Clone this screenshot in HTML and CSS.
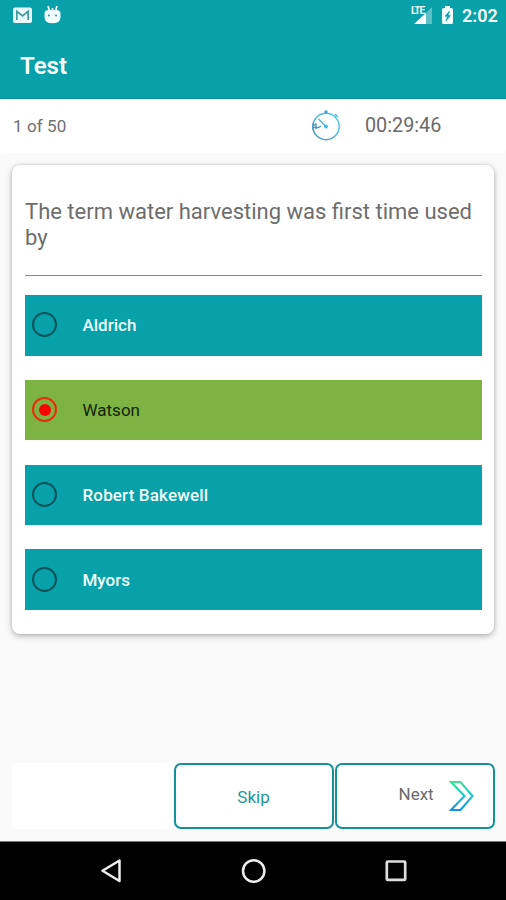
FILE: index.html
```html
<!DOCTYPE html>
<html lang="en">
<head>
<meta charset="utf-8">
<title>Test</title>
<link rel="stylesheet" href="styles.css">
</head>
<body>
<div class="screen">
  <header class="header">
    <div class="status">
      <svg class="status-left" width="70" height="30" viewBox="0 0 70 30">
        <rect x="13" y="7.5" width="19" height="15.5" rx="2" fill="#e9fbfb"/>
        <path d="M16.8 20V11.3l5.7 4.6 5.7-4.6V20" fill="none" stroke="#3f9b9d" stroke-width="1.7"/>
        <path d="M44.500 14q0-4 4-4h8q4 0 4 4v3q0 6.300-8 6.300t-8-6.300z" fill="#f3ffff"/>
        <path d="M48 6l1.500 5M57 6l-1.500 5M52.500 8v3" stroke="#f3ffff" stroke-width="1.700"/>
        <circle cx="49" cy="15.500" r="1" fill="#08a0a9"/><circle cx="56" cy="15.500" r="1" fill="#08a0a9"/>
      </svg>
      <div class="status-right">
        <div class="signal">
          <svg width="24" height="30" viewBox="0 0 24 30">
            <path d="M22 7v17H16V13z" fill="#5fc0c5"/>
            <path d="M4 24L16 13V24z" fill="#fff"/>
          </svg>
          <span class="lte">LTE</span>
        </div>
        <svg class="battery" width="14" height="30" viewBox="0 0 14 30">
          <path d="M4 6h5v2h1.500q1.500 0 1.500 1.500V22.500q0 1.500-1.500 1.500H2.500Q1 24 1 22.500V9.500Q1 8 2.500 8H4z" fill="#f3ffff"/>
          <path d="M8.500 11L4 16.300h2.500L5 21l4.500-5.500H7z" fill="#08a0a9" stroke="#08a0a9" stroke-width=".6"/>
        </svg>
        <span class="clock">2:02</span>
      </div>
    </div>
    <h1 class="title">Test</h1>
  </header>

  <section class="meta">
    <span class="count">1 of 50</span>
    <svg class="timer" width="32" height="34" viewBox="0 0 32 34">
      <defs><linearGradient id="tg" x1="0" y1="1" x2="1" y2="0"><stop offset="0" stop-color="#4b92c6"/><stop offset="1" stop-color="#55d5f2"/></linearGradient></defs>
      <circle cx="17" cy="18.500" r="13.200" fill="none" stroke="url(#tg)" stroke-width="1.500"/>
      <path d="M17 3V6M26 9l2-2M26 6l3 3" fill="none" stroke="#4bbde0" stroke-width="1.300"/>
      <circle cx="17" cy="4" r="1.700" fill="#3aa6cd"/>
      <path d="M9.500 11L17 18.500" stroke="#53b9dc" stroke-width="1.600"/>
      <circle cx="17" cy="18.500" r="1.900" fill="#38bce0"/>
      <path d="M4 15v7M7 15v6M3.500 19.500h6l2.500-1.500M3.500 17h4" fill="none" stroke="#4c97c2" stroke-width="1.300"/>
    </svg>
    <span class="time">00:29:46</span>
  </section>

  <main class="card">
    <p class="question">The term water harvesting was first time used by</p>
    <div class="options">
      <div class="option"><span class="radio"></span>Aldrich</div>
      <div class="option selected"><span class="radio"></span>Watson</div>
      <div class="option"><span class="radio"></span><span class="wide">Robert Bakewell</span></div>
      <div class="option"><span class="radio"></span>Myors</div>
    </div>
  </main>

  <div class="actions">
    <div class="blank"></div>
    <div class="button skip">Skip</div>
    <div class="button next"><span>Next</span>
      <svg width="26" height="32" viewBox="0 0 26 32">
        <defs><linearGradient id="ng" x1="0" y1="0" x2="0" y2="1"><stop offset="0" stop-color="#3be394"/><stop offset=".5" stop-color="#1cc5cf"/><stop offset="1" stop-color="#1691e0"/></linearGradient></defs>
        <path d="M2 2H11.500L23.500 16 11.500 30H2L15.500 16z" fill="none" stroke="url(#ng)" stroke-width="2.100"/>
      </svg>
    </div>
  </div>

  <nav class="nav">
    <svg width="24" height="28" viewBox="0 0 24 28"><path d="M20.500 3.500V24L3.500 13.800z" fill="none" stroke="#eee" stroke-width="2.500" stroke-linejoin="round"/></svg>
    <svg width="28" height="28" viewBox="0 0 28 28"><circle cx="13.700" cy="14" r="10.700" fill="none" stroke="#eee" stroke-width="2.500"/></svg>
    <svg width="24" height="28" viewBox="0 0 24 28"><rect x="2.800" y="4.500" width="18.400" height="18.400" rx="1" fill="none" stroke="#ddd" stroke-width="2.700"/></svg>
  </nav>
</div>
</body>
</html>
```
FILE: styles.css
```css
* { box-sizing: border-box; }
body { margin: 0; font-family: Roboto, "Liberation Sans", sans-serif; }
.screen { width: 506px; height: 900px; background: #fafafa; display: flex; flex-direction: column; overflow: hidden; }
.header { height: 98.5px; background: #08a0a9; color: #f6ffff; flex: none; border-bottom: 1px solid #078f97; }
.status { height: 30px; display: flex; justify-content: space-between; }
.status-right { display: flex; padding-right: 9px; }
.signal { position: relative; width: 24px; margin-right: 7px; }
.lte { position: absolute; left: 1px; top: 5px; font-size: 10px; line-height: 12px; font-weight: 700; letter-spacing: -1px; }
.battery { margin-right: 7px; }
.clock { font-size: 18px; font-weight: 600; line-height: 32px; width: 35px; white-space: nowrap; }
.title { margin: 20px 0 0 20px; font-size: 24px; line-height: 32px; font-weight: 600; }
.meta { height: 54px; flex: none; background: #fff; border-radius: 0 0 4px 4px; display: flex; align-items: center; color: #707070; padding-left: 13px; }
.count { width: 296px; font-size: 17px; padding-top: 1px; letter-spacing: .1px; }
.timer { flex: none; margin-top: -1px; }
.time { margin-left: 24px; font-size: 19.800px; color: #6a6a6a; }
.card { margin: 12.500px 12px 0; height: 469px; flex: none; border-radius: 8px; background: #fff; box-shadow: 0 2px 6px rgba(0,0,0,.28), 0 0 3px rgba(0,0,0,.12); padding: 34px 12px 0 13px; }
.question { margin: 0; height: 77px; border-bottom: 1px solid #4a9fa8; font-size: 22px; line-height: 26px; color: #6d6d6d; }
.options { margin-top: 19px; display: flex; flex-direction: column; gap: 24.300px; }
.option { height: 60.500px; background: #08a0a9; color: #f0ffff; display: flex; align-items: center; font-size: 17px; font-weight: 500; padding: 0 0 0 7px; }
.wide { letter-spacing: .15px; }
.radio { width: 25px; height: 25px; border: 2px solid #06535a; border-radius: 50%; margin-right: 25.500px; margin-top: -1px; display: flex; align-items: center; justify-content: center; }
.selected { background: #7cb342; color: #142405; font-weight: 400; }
.selected .radio { border-color: #e92b09; }
.selected .radio::after { content: ""; width: 12px; height: 12px; background: #f00; border-radius: 50%; }
.actions { margin: 129px 11.500px 0 12px; height: 65.500px; display: flex; gap: 1px; flex: none; }
.blank { flex: 1; background: #fff; }
.button { width: 160px; border: 2px solid #14919a; border-radius: 7px; background: #fff; display: flex; align-items: center; font-size: 17px; }
.skip { justify-content: center; color: #24959c; padding-top: 2px; }
.next { color: #6a6a6a; padding-left: 62px; }
.next span { margin: -4px 15px 0 0; }
.nav { margin-top: auto; height: 59px; border-top: 1.500px solid #777; background: #000; display: flex; align-items: center; justify-content: space-between; padding: 0 98px 0 99px; flex: none; }
```
